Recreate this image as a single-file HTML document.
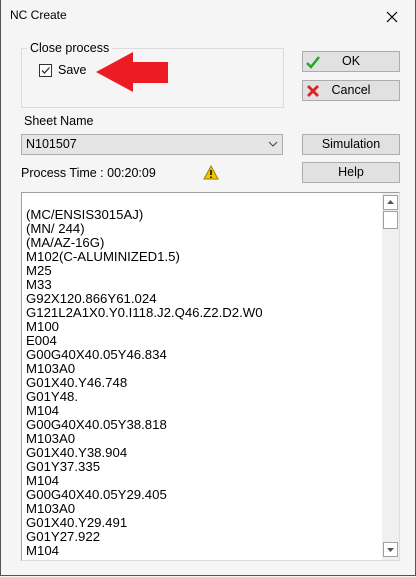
<!DOCTYPE html>
<html><head><style>
body{margin:0;width:416px;height:577px;background:#f5f5f5;font-family:"Liberation Sans",sans-serif;font-size:12.5px;color:#000;position:relative;overflow:hidden}
.a{position:absolute}
.btn{position:absolute;background:#e1e1e1;border:1px solid #adadad;box-sizing:border-box;text-align:center;line-height:18px}
</style></head><body>
<div class="a" style="left:0;top:0;width:414px;height:575px;border:1px solid #555;border-top:none"></div>
<div class="a" style="left:10px;top:8px;font-size:12px">NC Create</div>
<svg class="a" style="left:386px;top:11px" width="12" height="12"><path d="M1 1L11 11M11 1L1 11" stroke="#000" stroke-width="1.2"/></svg>
<div class="a" style="left:21px;top:48px;width:261px;height:58px;border:1px solid #dcdcdc"></div>
<div class="a" style="left:27px;top:41px;background:#f5f5f5;padding:0 3px">Close process</div>
<div class="a" style="left:39px;top:64px;width:11px;height:11px;border:1px solid #333;background:#fff"></div>
<svg class="a" style="left:40px;top:65px" width="11" height="11"><path d="M2 5.5L4.5 8L9.5 2.5" stroke="#333" stroke-width="1.3" fill="none"/></svg>
<div class="a" style="left:58px;top:63px">Save</div>
<svg class="a" style="left:95px;top:51px" width="74" height="42"><path d="M1 21L38 1L38 11L73 11L73 32L38 32L38 41Z" fill="#ed1c24"/></svg>
<div class="btn" style="left:302px;top:51px;width:98px;height:21px">OK</div>
<svg class="a" style="left:305px;top:54px" width="16" height="16"><path d="M2 9L6 13L14 3" stroke="#2a2" stroke-width="2.5" fill="none"/></svg>
<div class="btn" style="left:302px;top:80px;width:98px;height:21px">Cancel</div>
<svg class="a" style="left:305px;top:83px" width="16" height="16"><path d="M3 3L13 13M13 3L3 13" stroke="#d22" stroke-width="2.8"/></svg>
<div class="a" style="left:24px;top:114px">Sheet Name</div>
<div class="a" style="left:21px;top:134px;width:262px;height:21px;background:#e5e5e5;border:1px solid #adadad;box-sizing:border-box;line-height:19px;padding-left:4px">N101507</div>
<svg class="a" style="left:268px;top:141px" width="10" height="7"><path d="M1 1L5 5L9 1" stroke="#444" fill="none"/></svg>
<div class="btn" style="left:302px;top:134px;width:98px;height:21px">Simulation</div>
<div class="a" style="left:21px;top:166px">Process Time : 00:20:09</div>
<svg class="a" style="left:203px;top:165px" width="16" height="15"><path d="M8 1L15 14L1 14Z" fill="#f5c400" stroke="#a08000"/><path d="M8 5V10M8 11.5V13" stroke="#000" stroke-width="1.5"/></svg>
<div class="btn" style="left:302px;top:162px;width:98px;height:21px">Help</div>
<div class="a" style="left:21px;top:192px;width:379px;height:369px;background:#fff;border:1px solid #a0a0a0;border-right-color:#ddd;border-bottom-color:#ddd;box-sizing:border-box"></div>
<div class="a" style="left:382px;top:193px;width:17px;height:367px;background:#f0f0f0"></div>
<div class="a" style="left:383px;top:195px;width:15px;height:15px;border:1px solid #a0a0a0;box-sizing:border-box;background:#fff"></div>
<svg class="a" style="left:387px;top:200px" width="7" height="5"><path d="M0 4L3.5 0L7 4Z" fill="#555"/></svg>
<div class="a" style="left:383px;top:211px;width:15px;height:18px;border:1px solid #a0a0a0;box-sizing:border-box;background:#fff"></div>
<div class="a" style="left:383px;top:542px;width:15px;height:15px;border:1px solid #a0a0a0;box-sizing:border-box;background:#fff"></div>
<svg class="a" style="left:387px;top:548px" width="7" height="5"><path d="M0 0L3.5 4L7 0Z" fill="#555"/></svg>
<div class="a" style="left:26px;top:208px;line-height:14px;font-size:13.2px;white-space:pre">(MC/ENSIS3015AJ)
(MN/ 244)
(MA/AZ-16G)
M102(C-ALUMINIZED1.5)
M25
M33
G92X120.866Y61.024
G121L2A1X0.Y0.I118.J2.Q46.Z2.D2.W0
M100
E004
G00G40X40.05Y46.834
M103A0
G01X40.Y46.748
G01Y48.
M104
G00G40X40.05Y38.818
M103A0
G01X40.Y38.904
G01Y37.335
M104
G00G40X40.05Y29.405
M103A0
G01X40.Y29.491
G01Y27.922
M104</div>
</body></html>
